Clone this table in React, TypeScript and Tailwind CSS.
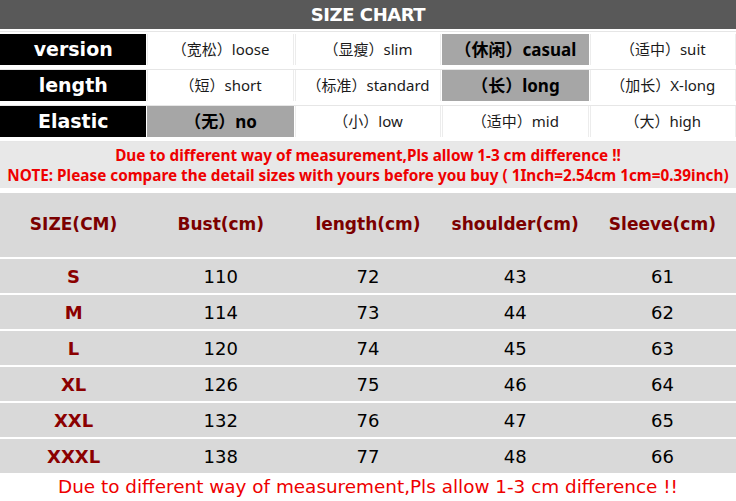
import React from "react";

const attrs = [
  {
    label: "version",
    cells: [
      { zh: "宽松", en: "loose" },
      { zh: "显瘦", en: "slim" },
      { zh: "休闲", en: "casual", on: true },
      { zh: "适中", en: "suit" },
    ],
  },
  {
    label: "length",
    cells: [
      { zh: "短", en: "short" },
      { zh: "标准", en: "standard" },
      { zh: "长", en: "long", on: true },
      { zh: "加长", en: "X-long" },
    ],
  },
  {
    label: "Elastic",
    cells: [
      { zh: "无", en: "no", on: true },
      { zh: "小", en: "low" },
      { zh: "适中", en: "mid" },
      { zh: "大", en: "high" },
    ],
  },
];

const heads = ["SIZE(CM)", "Bust(cm)", "length(cm)", "shoulder(cm)", "Sleeve(cm)"];

const sizes = [
  ["S", 110, 72, 43, 61],
  ["M", 114, 73, 44, 62],
  ["L", 120, 74, 45, 63],
  ["XL", 126, 75, 46, 64],
  ["XXL", 132, 76, 47, 65],
  ["XXXL", 138, 77, 48, 66],
];

const font = { fontFamily: "Tahoma, 'DejaVu Sans', 'Noto Sans CJK SC', sans-serif" };
const yahei = { fontFamily: "'Noto Sans', 'Noto Sans CJK SC', sans-serif" };

export default function App() {
  return (
    <div className="w-[736px] h-[501px] overflow-hidden bg-white" style={font}>
      <div className="flex h-[29px] items-center justify-center bg-[#595959] text-[18px] font-bold tracking-tight text-white">
        SIZE CHART
      </div>

      <div className="mt-[2px] border-t border-[#e6e6e6] pt-[2px]">
        {attrs.map((row) => (
          <div key={row.label} className="grid h-[36px] grid-cols-5 gap-x-px border-b border-[#e6e6e6] pb-[4px]">
            <div className="flex items-center justify-center bg-black text-[19px] font-bold text-white">
              {row.label}
            </div>
            {row.cells.map((c) => (
              <div
                key={c.en}
                style={yahei}
                className={
                  c.on
                    ? "flex items-center justify-center bg-[#a6a6a6] text-[17px] font-bold text-black"
                    : "flex items-center justify-center border-x border-[#ececec] bg-white text-[15px] text-[#1a1a1a]"
                }
              >
                （{c.zh}）{c.en}
              </div>
            ))}
          </div>
        ))}
      </div>

      <div
        className="flex h-[46px] flex-col items-center justify-center bg-[#e8e8e8] text-[15.3px] font-bold leading-[20px] text-[#ee0000]"
        style={yahei}
      >
        <div>Due to different way of measurement,Pls allow 1-3 cm difference !!</div>
        <div className="whitespace-nowrap">
          NOTE: Please compare the detail sizes with yours before you buy ( 1Inch=2.54cm 1cm=0.39inch)
        </div>
      </div>

      <div className="mt-[5px] grid h-[64px] grid-cols-5 bg-[#d9d9d9] text-[17px] font-bold text-[#7b0000]">
        {heads.map((h) => (
          <div key={h} className="flex items-center justify-center">
            {h}
          </div>
        ))}
      </div>

      {sizes.map((r) => (
        <div key={r[0]} className="mt-[2px] grid h-[34px] grid-cols-5 bg-[#d9d9d9] text-[18px] text-black">
          {r.map((v, i) => (
            <div
              key={i}
              className={
                i === 0
                  ? "flex items-center justify-center font-bold text-[#8b0000]"
                  : "flex items-center justify-center"
              }
            >
              {v}
            </div>
          ))}
        </div>
      ))}

      <div className="flex h-[28px] items-center justify-center whitespace-nowrap text-[18.4px] text-[#ee0000]">
        Due to different way of measurement,Pls allow 1-3 cm difference !!
      </div>
    </div>
  );
}
